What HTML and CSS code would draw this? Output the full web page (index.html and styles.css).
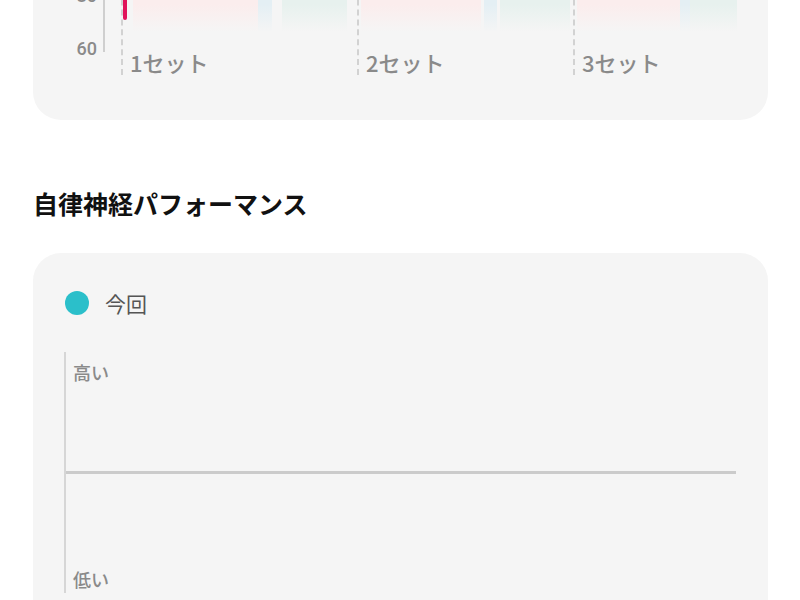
FILE: index.html
```html
<!DOCTYPE html>
<html lang="ja">
<head>
  <meta charset="UTF-8" />
  <meta name="viewport" content="width=device-width, initial-scale=1.0"/>
  <title>自律神経パフォーマンス</title>
  <link rel="stylesheet" href="styles.css">
</head>
<body>
  <div class="card trend-card">
    <div class="trend-chart">
      <div class="y-axis">
        <div class="y-labels">
          <span>80</span>
          <span>60</span>
        </div>
        <div class="y-line"></div>
      </div>

      <div class="sets">
        <div class="set" style="width: 236px;">
          <div class="bands">
            <div class="hr-line"></div>
            <div class="band pink" style="margin-left: 4px; width: 125px;"></div>
            <div class="band blue" style="width: 14px;"></div>
            <div class="band green" style="margin-left: 10px; width: 65px;"></div>
          </div>
          <div class="set-label">1セット</div>
        </div>
        <div class="set" style="width: 216px;">
          <div class="bands">
            <div class="band pink" style="margin-left: 2px; width: 120px;"></div>
            <div class="band blue" style="margin-left: 3px; width: 13px;"></div>
            <div class="band green" style="margin-left: 3px; width: 70px;"></div>
          </div>
          <div class="set-label">2セット</div>
        </div>
        <div class="set" style="width: 164px;">
          <div class="bands">
            <div class="band pink" style="margin-left: 2px; width: 104px;"></div>
            <div class="band blue" style="width: 10px;"></div>
            <div class="band green" style="width: 47px;"></div>
          </div>
          <div class="set-label">3セット</div>
        </div>
      </div>
    </div>
  </div>

  <h2 class="section-title">自律神経パフォーマンス</h2>

  <div class="card perf-card">
    <div class="legend">
      <span class="dot"></span>
      <span>今回</span>
    </div>

    <div class="perf-chart">
      <div class="half top">
        <span class="level">高い</span>
      </div>
      <div class="mid-line"></div>
      <div class="half bottom">
        <span class="level">低い</span>
      </div>
    </div>
  </div>
</body>
</html>
```

FILE: styles.css
```css
body {
  margin: 0;
  padding: 0;
  background: #fff;
  font-family: 'Noto Sans CJK JP', 'Noto Sans', sans-serif;
  color: #222;
  overflow: hidden;
}

.card {
  background: #f5f5f5;
  border-radius: 28px;
  margin: 0 32px 0 33px;
}

/* heart rate trend (top card, scrolled partly out of view) */
.trend-card {
  margin-top: -60px;
  padding: 0 31px 45px 0;
}

.trend-chart {
  display: flex;
  align-items: flex-start;
}

.y-axis {
  display: flex;
  align-items: flex-start;
}

.y-labels {
  width: 64px;
  height: 121px;
  display: flex;
  flex-direction: column;
  justify-content: flex-end;
  gap: 33px;
  padding-bottom: 2px;
  box-sizing: border-box;
  text-align: right;
  font-family: Roboto, 'Noto Sans', sans-serif;
  font-size: 18px;
  font-weight: 500;
  line-height: 20px;
  color: #8a8a8a;
}

.y-line {
  width: 2px;
  height: 112px;
  margin-left: 6px;
  background: #cfcfcf;
}

.sets {
  display: flex;
  margin-left: 16px;
}

.set {
  border-left: 2px dashed #d2d2d2;
  height: 135px;
  box-sizing: border-box;
}

.bands {
  display: flex;
  height: 92px;
}

.band {
  height: 100%;
}

.band.pink {
  background: linear-gradient(to bottom, #fbeded 70%, rgba(251, 237, 237, 0));
}

.band.blue {
  background: linear-gradient(to bottom, #e4eff4 70%, rgba(228, 239, 244, 0));
}

.band.green {
  background: linear-gradient(to bottom, #e7f1ee 70%, rgba(231, 241, 238, 0));
}

.hr-line {
  width: 4px;
  height: 80px;
  background: #e0145a;
  border-radius: 0 0 2px 2px;
  margin-right: 2px;
}

.set-label {
  padding: 18px 0 0 7px;
  font-size: 22px;
  font-weight: 500;
  line-height: 24px;
  color: #8a8a8a;
  white-space: nowrap;
}

.section-title {
  margin: 65px 33px 32px;
  font-size: 25px;
  line-height: 36px;
  font-weight: bold;
  color: #111;
}

/* autonomic performance card */
.perf-card {
  padding: 38px 32px 40px 31px;
}

.legend {
  display: flex;
  align-items: center;
  gap: 16px;
  font-size: 21px;
  line-height: 24px;
  color: #555;
}

.dot {
  width: 24px;
  height: 24px;
  border-radius: 50%;
  background: #2bbfca;
  margin-left: 1px;
}

.perf-chart {
  margin-top: 37px;
  border-left: 2px solid #d6d6d6;
  height: 241px;
  display: flex;
  flex-direction: column;
}

.half {
  flex: 1;
  display: flex;
  padding: 9px 0 3px 7px;
}

.half.bottom {
  align-items: flex-end;
}

.level {
  font-size: 18px;
  font-weight: 500;
  line-height: 22px;
  color: #8a8a8a;
}

.mid-line {
  height: 3px;
  background: #cbcbcb;
}
```
